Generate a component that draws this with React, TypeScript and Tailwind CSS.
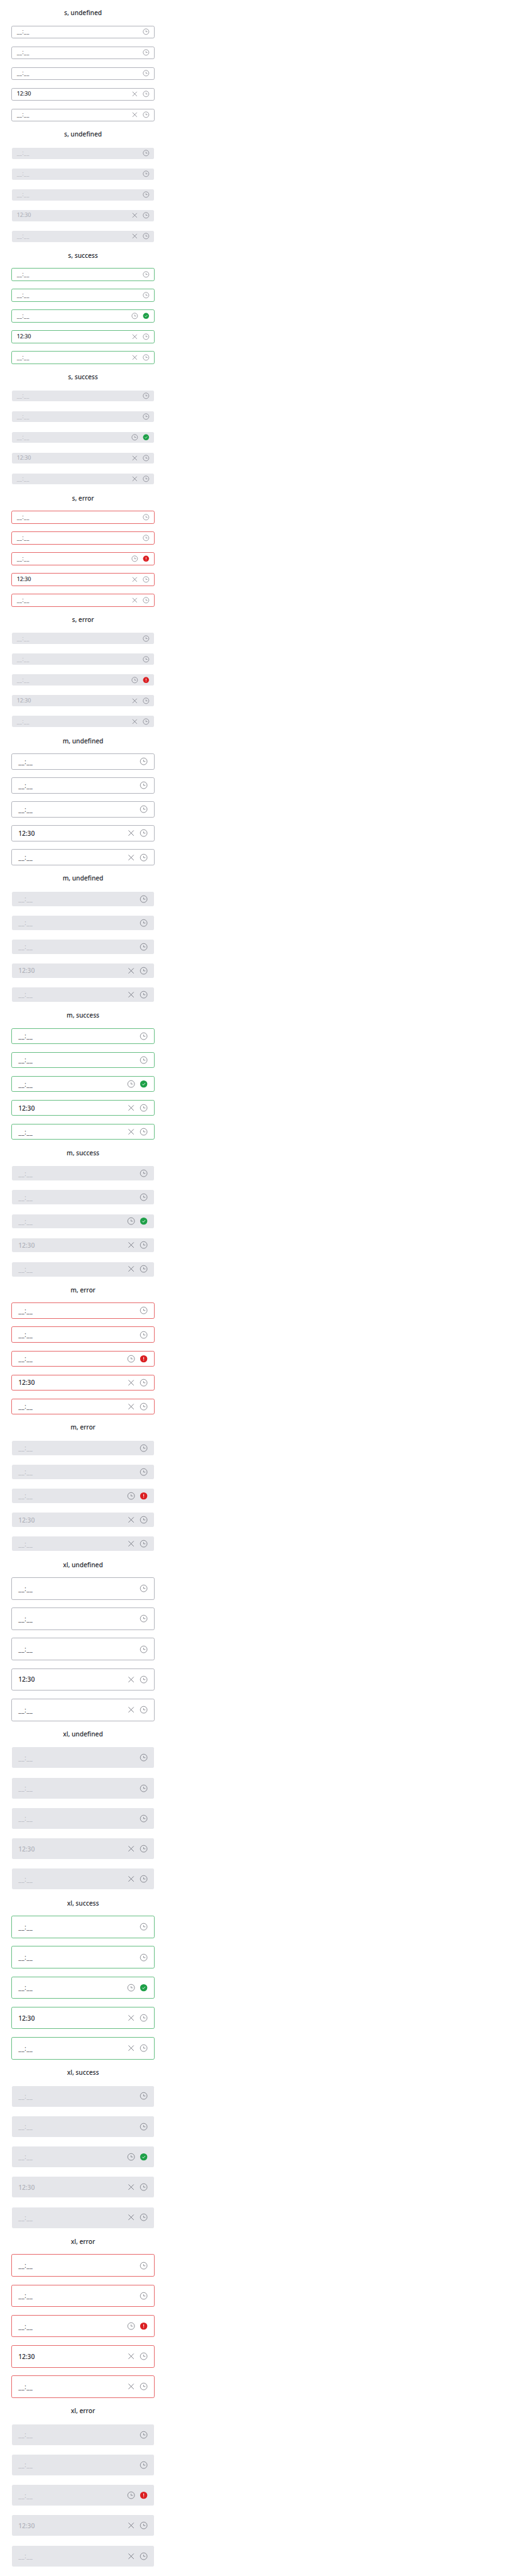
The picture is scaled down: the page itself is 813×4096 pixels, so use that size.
import React from "react";

type Size = "s" | "m" | "xl";
type Status = "undefined" | "success" | "error";

const sizes: Size[] = ["s", "m", "xl"];
const statuses: Status[] = ["undefined", "success", "error"];

const fieldSize: Record<Size, string> = {
  s: "h-8 pl-3.5 pr-3 text-[8.89px]",
  m: "h-10 pl-4.5 pr-4 text-[10.16px]",
  xl: "h-14 pl-4.5 pr-4 text-[10.16px]",
};

const iconSize: Record<Size, string> = { s: "size-5", m: "size-6", xl: "size-6" };

const borders: Record<Status, string> = {
  undefined: "border-[#9194a0]/70",
  success: "border-[#1ea048]/68",
  error: "border-[#db1f22]/68",
};

function ClockIcon({ className }: { className: string }) {
  return (
    <svg viewBox="0 0 24 24" className={className} fill="none" stroke="#6f717b" strokeWidth="1.25">
      <circle cx="12" cy="12" r="8.5" />
      <path d="M11.8 8.2v4.1h4.4" />
    </svg>
  );
}

function CloseIcon({ className }: { className: string }) {
  return (
    <svg viewBox="0 0 24 24" className={className} fill="none" stroke="#6f717b" strokeWidth="1.4">
      <path d="M5.4 5.4l13.2 13.2M18.6 5.4L5.4 18.6" />
    </svg>
  );
}

function StatusIcon({ status, className }: { status: Status; className: string }) {
  if (status === "success") {
    return (
      <svg viewBox="0 0 24 24" className={className} fill="none">
        <circle cx="12" cy="12" r="9" fill="#1ea048" />
        <path d="M8.4 12.1l2.6 2.6 4.8-5" stroke="#fff" strokeWidth="1.4" />
      </svg>
    );
  }
  return (
    <svg viewBox="0 0 24 24" className={className} fill="none">
      <circle cx="12" cy="12" r="9" fill="#db1f22" />
      <path d="M12 7.4v5.8M12 14.8v1.6" stroke="#fff" strokeWidth="1.6" />
    </svg>
  );
}

interface FieldProps {
  size: Size;
  status: Status;
  disabled: boolean;
  value?: string;
  clearable?: boolean;
  showStatus?: boolean;
}

function TimeField({ size, status, disabled, value, clearable, showStatus }: FieldProps) {
  const icon = iconSize[size];
  const frame = disabled ? "m-0.5 rounded-[2.2px] bg-[#e5e6ea]" : `rounded-[2.6px] border ${borders[status]}`;
  return (
    <div className="grid w-90">
      <div className={`col-start-1 row-start-1 ${frame}`} />
      <div
        className={`col-start-1 row-start-1 flex items-center gap-2 ${fieldSize[size]} ${
          disabled ? "text-[#b0b2ba]" : "text-[#23252d]"
        }`}
      >
        <span className={value ? "flex-1 font-medium" : "flex-1 tracking-[0.045em] opacity-85"}>
          {value ?? "__:__"}
        </span>
        {clearable && <CloseIcon className={icon} />}
        <ClockIcon className={icon} />
        {showStatus && status !== "undefined" && <StatusIcon status={status} className={icon} />}
      </div>
    </div>
  );
}

function Section({ size, status, disabled }: { size: Size; status: Status; disabled: boolean }) {
  const shared = { size, status, disabled };
  return (
    <section className="flex w-90 flex-col gap-5">
      <h2 className="flex h-6 items-center justify-center text-[10.16px] font-medium">
        {`${size}, ${status}`}
      </h2>
      <TimeField {...shared} />
      <TimeField {...shared} />
      <TimeField {...shared} showStatus />
      <TimeField {...shared} value="12:30" clearable />
      <TimeField {...shared} clearable />
    </section>
  );
}

export default function App() {
  return (
    <main className="flex min-h-[4096px] w-full flex-col gap-5 bg-white py-5 pl-7 font-['Noto_Sans',sans-serif] leading-none text-[#23252d] [--spacing:2.5394px]">
      {sizes.map((size) =>
        statuses.map((status) =>
          [false, true].map((disabled) => (
            <Section key={`${size}-${status}-${disabled}`} size={size} status={status} disabled={disabled} />
          )),
        ),
      )}
    </main>
  );
}
